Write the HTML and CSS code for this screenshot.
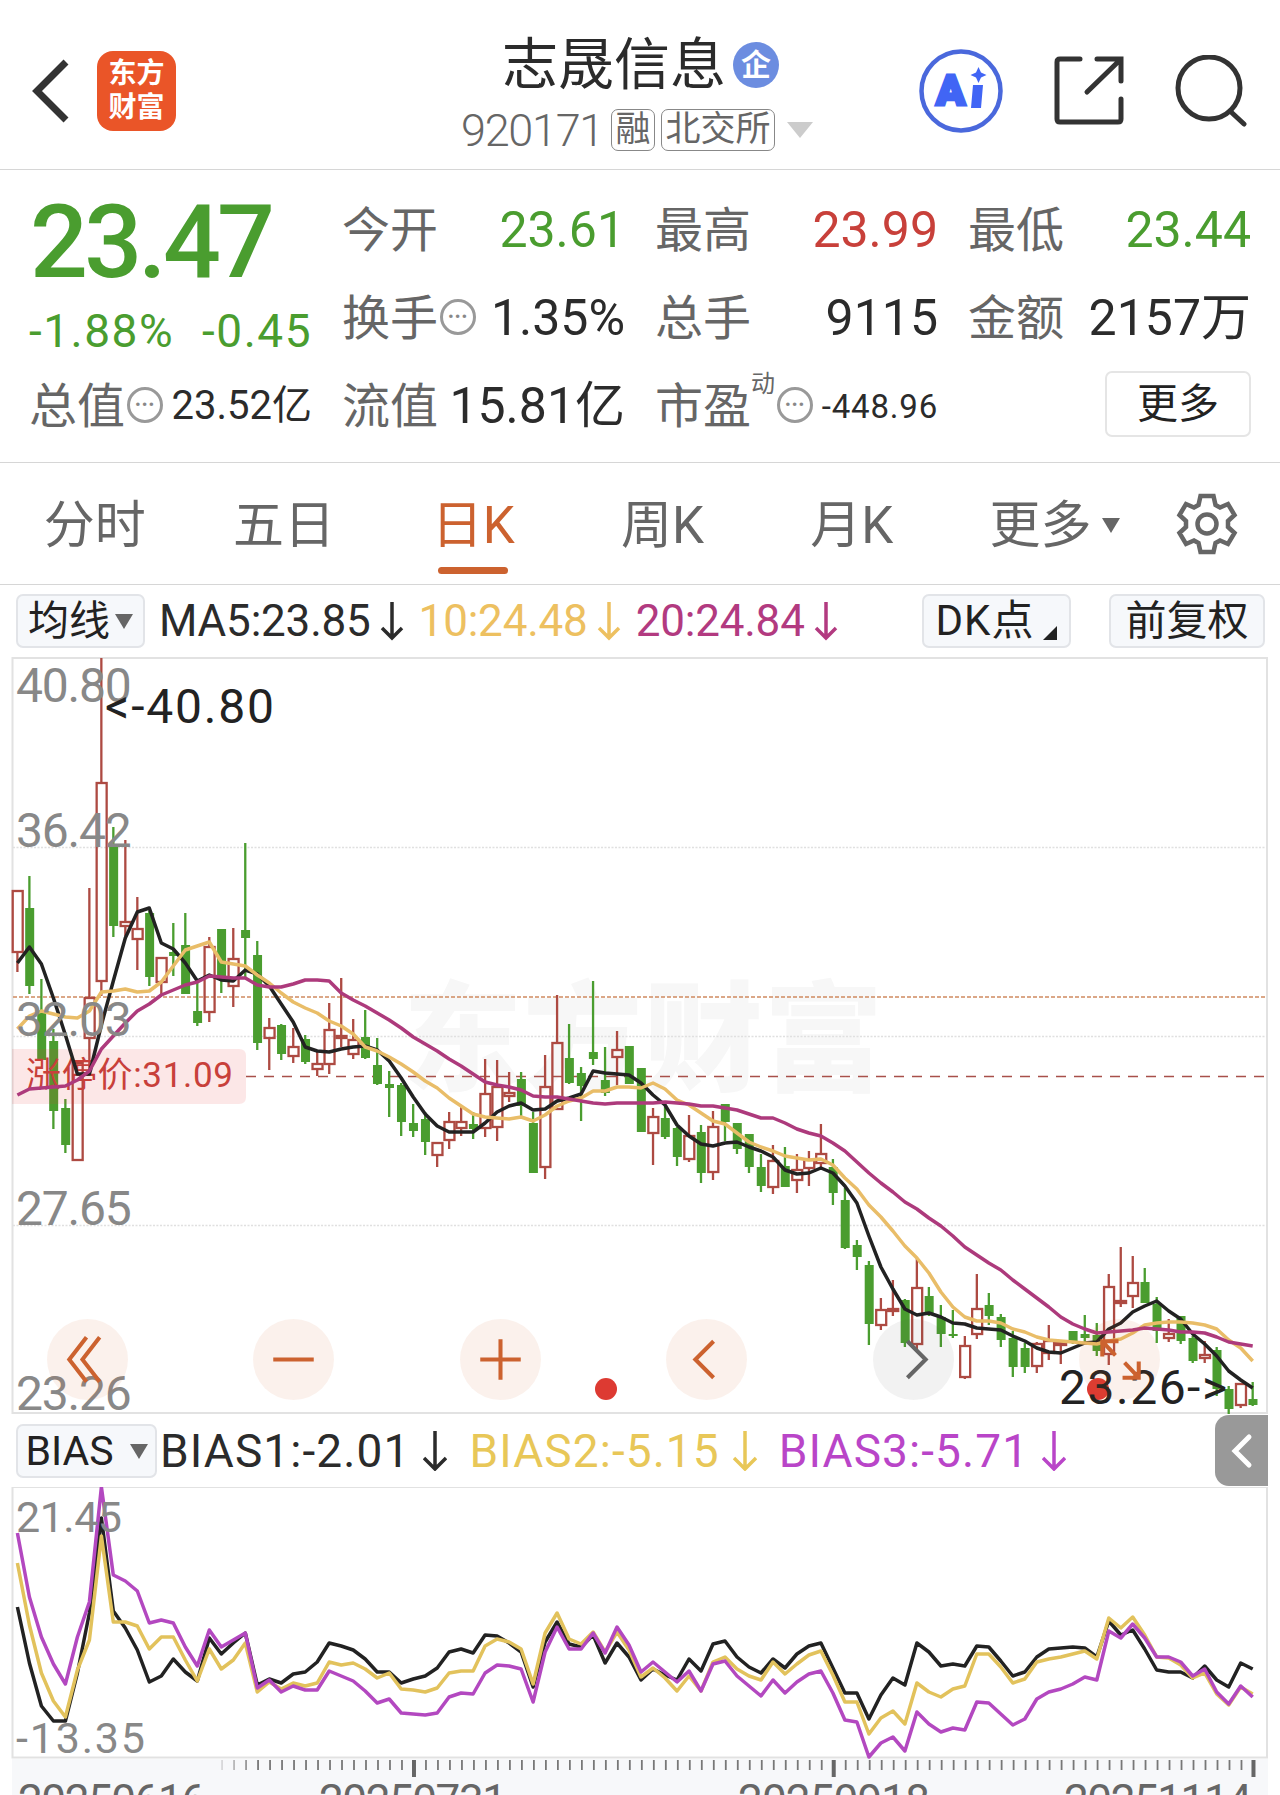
FILE: index.html
```html
<!DOCTYPE html>
<html lang="zh-CN">
<head>
  <meta charset="UTF-8">
  <title>志晟信息 920171</title>
  <link rel="stylesheet" href="styles.css">
</head>
<body>

<header class="topbar">
  <svg class="back" width="40" height="66" viewBox="0 0 40 66"><path d="M35 4 L6 33 L35 62"/></svg>
  <div class="logo"><span>东方</span><span>财富</span></div>
  <div class="title">
    <div class="name">志晟信息<span class="badge">企</span></div>
    <div class="code"><span class="num">920171</span><span class="tag">融</span><span class="tag">北交所</span><i class="tri tri-light"></i></div>
  </div>
  <svg class="ai" width="84" height="84" viewBox="0 0 84 84">
    <circle cx="42" cy="42" r="39.5"/>
    <text x="17" y="56">A</text>
    <path d="M54 36 h10 l-2 23 h-10z M59.500 18 l2.500 5.500 5.500 2.500 -5.500 2.500 -2.500 5.500 -2.500 -5.500 -5.500 -2.500 5.500 -2.500z"/>
  </svg>
  <svg class="share" width="70" height="70" viewBox="0 0 70 70"><path d="M26 3 H6 Q3 3 3 6 V63 Q3 66 6 66 H64 Q67 66 67 63 V43 M43 3 H67 V25 M66 4 L33 36"/></svg>
  <svg class="search" width="72" height="72" viewBox="0 0 72 72"><circle cx="34" cy="33" r="31"/><path d="M55 56 L69 69"/></svg>
</header>

<section class="quote">
  <div class="price">
    <div class="last">23.47</div>
    <div class="change"><span>-1.88%</span><span>-0.45</span></div>
  </div>
  <div class="cell"><label>今开</label><b class="green">23.61</b></div>
  <div class="cell"><label>最高</label><b class="red">23.99</b></div>
  <div class="cell"><label>最低</label><b class="green">23.44</b></div>
  <div class="cell"><label>换手</label><i class="dots">•••</i><b>1.35%</b></div>
  <div class="cell"><label>总手</label><b>9115</b></div>
  <div class="cell"><label>金额</label><b>2157万</b></div>
  <div class="cell"><label>总值</label><i class="dots">•••</i><b class="mid">23.52亿</b></div>
  <div class="cell"><label>流值</label><b>15.81亿</b></div>
  <div class="cell"><label>市盈</label><sup>动</sup><i class="dots">•••</i><b class="small">-448.96</b></div>
  <div class="cell"><button class="more">更多</button></div>
</section>

<nav class="tabs">
  <a>分时</a>
  <a>五日</a>
  <a class="active">日K</a>
  <a>周K</a>
  <a>月K</a>
  <a class="tab-more">更多<i class="tri"></i></a>
  <svg class="gear" width="62" height="62" viewBox="-31 -31 62 62">
    <path d="M-6.500 -28 H6.500 L8.500 -19 L13 -16.500 L21 -20 L27.500 -9 L21 -3 V3 L27.500 9 L21 20 L13 16.500 L8.500 19 L6.500 28 H-6.500 L-8.500 19 L-13 16.500 L-21 20 L-27.500 9 L-21 3 V-3 L-27.500 -9 L-21 -20 L-13 -16.500 L-8.500 -19Z"/>
    <circle r="9.500"/>
  </svg>
</nav>

<div class="indicator ma">
  <button class="pill">均线<i class="tri"></i></button>
  <span class="ma5">MA5:23.85</span><svg class="arrow ma5" viewBox="0 0 24 40"><path d="M12 1 V37 M2 27 L12 37 L22 27"/></svg>
  <span class="ma10">10:24.48</span><svg class="arrow ma10" viewBox="0 0 24 40"><path d="M12 1 V37 M2 27 L12 37 L22 27"/></svg>
  <span class="ma20">20:24.84</span><svg class="arrow ma20" viewBox="0 0 24 40"><path d="M12 1 V37 M2 27 L12 37 L22 27"/></svg>
  <button class="pill dk">DK点<i class="corner"></i></button>
  <button class="pill fq">前复权</button>
</div>

<div class="kline">
  <svg id="kline" width="1280" height="758" viewBox="0 657 1280 758">
    <text class="watermark" x="403" y="1082" textLength="480">东方财富</text>
    <rect class="frame" x="12.500" y="658" width="1254.500" height="755"/>
    <path class="grid" d="M13 847.500 H1267 M13 1036.500 H1267 M13 1225.500 H1267"/>
    <path class="line-orange" d="M13 997 H1267"/>
    <path class="line-red" d="M246 1076.500 H1267"/>
    <g id="candles"></g>
    <path class="limit-box" d="M12 1049 H239 Q246 1049 246 1056 V1097 Q246 1104 239 1104 H12Z"/>
    <text class="limit-text" x="26" y="1087" textLength="207">涨停价:31.09</text>
    <g id="maLines"></g>
    <g class="axis">
      <text x="16" y="702">40.80</text>
      <text x="16" y="847">36.42</text>
      <text x="16" y="1036">32.03</text>
      <text x="16" y="1225">27.65</text>
      <text x="16" y="1410">23.26</text>
    </g>
    <circle class="event" cx="606" cy="1389" r="11"/>
    <circle class="event" cx="1098" cy="1389" r="11"/>
    <text class="mark" x="105" y="723" textLength="169">&lt;-40.80</text>
    <text class="mark" x="1059" y="1404" textLength="168">23.26-&gt;</text>
  </svg>
  <div class="tools">
    <svg viewBox="-40 -40 80 80"><path d="M-1 -22 L-18 0 L-1 22 M12 -22 L-5 0 L12 22"/></svg>
    <svg viewBox="-40 -40 80 80"><path d="M-20 0 H20"/></svg>
    <svg viewBox="-40 -40 80 80"><path d="M-20 0 H20 M0 -20 V20"/></svg>
    <svg viewBox="-40 -40 80 80"><path d="M7 -18 L-11 0 L7 18"/></svg>
    <svg class="off" viewBox="-40 -40 80 80"><path d="M-6 -18 L12 0 L-6 18"/></svg>
    <svg viewBox="-40 -40 80 80"><path d="M-17 -3 V-18 H-1 M-17 -18 L-4 -4 M3 18 H19 V2 M19 18 L5 3"/></svg>
  </div>
</div>

<div class="indicator bias">
  <button class="pill">BIAS<i class="tri"></i></button>
  <span class="b1">BIAS1:-2.01</span><svg class="arrow b1" viewBox="0 0 24 40"><path d="M12 0 V38 M1 27 L12 38 L23 27"/></svg>
  <span class="b2">BIAS2:-5.15</span><svg class="arrow b2" viewBox="0 0 24 40"><path d="M12 0 V38 M1 27 L12 38 L23 27"/></svg>
  <span class="b3">BIAS3:-5.71</span><svg class="arrow b3" viewBox="0 0 24 40"><path d="M12 0 V38 M1 27 L12 38 L23 27"/></svg>
  <div class="toggle"><svg width="24" height="36" viewBox="0 0 24 36"><path d="M19 4 L5 18 L19 32"/></svg></div>
</div>

<svg class="sub" width="1280" height="308" viewBox="0 1487 1280 308">
  <rect class="frame" x="12.500" y="1487" width="1254.500" height="270.500"/>
  <rect class="timebar" x="12" y="1759" width="1256" height="36"/>
  <g id="biasLines"></g>
  <g class="axis axis-sub">
    <text x="16" y="1532" textLength="106">21.45</text>
    <text x="16" y="1753" textLength="129">-13.35</text>
  </g>
  <g id="ticks"></g>
  <g class="dates">
    <text x="18" y="1816" textLength="188">20250616</text>
    <text x="319" y="1816" textLength="188">20250731</text>
    <text x="738" y="1816" textLength="192">20250918</text>
    <text x="1064" y="1816" textLength="188">20251114</text>
  </g>
</svg>

<script>
  const x = i => 17.4 + i * 11.993;

  // [up(1)/down(0), high, body top, body bottom, low]
  const candles = [
    [1,891,891,952,972],[0,876,908,986,994],[0,979,1012,1060,1060],[0,1029,1041,1111,1129],[0,1099,1108,1145,1153],
    [1,1063,1063,1160,1160],[1,888,998,1038,1070],[1,658,783,981,996],[0,827,846,926,937],[1,840,922,926,936],
    [1,897,929,939,970],[0,911,913,977,986],[1,958,958,982,994],[0,923,952,956,976],[0,913,945,994,994],
    [0,982,1011,1023,1026],[1,937,947,1012,1022],[0,929,929,979,993],[1,928,959,986,1007],[0,843,930,938,977],
    [0,941,955,1043,1050],[1,1018,1028,1038,1070],[0,1024,1025,1054,1060],[1,1028,1047,1056,1063],[0,1035,1039,1062,1064],
    [1,1050,1064,1069,1076],[1,1003,1030,1064,1074],[1,978,1036,1038,1047],[1,1019,1040,1054,1059],[0,1010,1037,1058,1059],
    [0,1038,1065,1084,1085],[0,1071,1084,1088,1117],[0,1083,1085,1122,1136],[0,1104,1123,1131,1137],[0,1112,1119,1142,1155],
    [1,1143,1143,1155,1167],[1,1112,1122,1140,1149],[1,1107,1122,1128,1136],[0,1112,1124,1129,1139],[1,1059,1094,1128,1137],
    [1,1060,1087,1127,1141],[1,1072,1093,1096,1102],[0,1072,1079,1106,1116],[0,1112,1123,1173,1173],[1,1055,1087,1167,1179],
    [1,995,1043,1109,1110],[0,1024,1058,1083,1084],[0,1067,1073,1086,1121],[0,981,1052,1059,1065],[0,1047,1080,1093,1096],
    [1,1031,1050,1057,1085],[0,1046,1046,1084,1084],[0,1068,1068,1132,1132],[1,1108,1117,1133,1165],[0,1107,1118,1137,1139],
    [0,1127,1128,1157,1166],[1,1115,1136,1159,1162],[0,1125,1132,1173,1183],[1,1111,1127,1172,1180],[0,1104,1104,1122,1141],
    [0,1123,1123,1149,1154],[0,1134,1134,1167,1173],[0,1154,1167,1186,1192],[1,1145,1161,1187,1194],[0,1147,1166,1187,1187],
    [1,1154,1170,1180,1193],[1,1151,1160,1168,1186],[1,1124,1154,1163,1168],[0,1159,1167,1193,1205],[0,1188,1200,1248,1249],
    [0,1240,1245,1257,1270],[0,1261,1265,1324,1345],[1,1298,1310,1325,1330],[1,1280,1309,1311,1316],[0,1299,1300,1343,1347],
    [1,1258,1288,1344,1352],[0,1287,1296,1315,1316],[0,1305,1317,1334,1347],[0,1310,1334,1336,1338],[1,1336,1346,1377,1379],
    [1,1274,1309,1334,1339],[0,1293,1305,1316,1325],[0,1314,1317,1340,1347],[0,1331,1338,1367,1377],[0,1343,1348,1367,1373],
    [1,1342,1344,1366,1373],[1,1325,1341,1353,1360],[1,1341,1343,1345,1364],[0,1331,1331,1341,1344],[0,1315,1334,1338,1342],
    [0,1323,1335,1351,1356],[1,1274,1287,1354,1365],[1,1247,1301,1303,1307],[1,1256,1283,1296,1308],[0,1268,1282,1303,1303],
    [0,1297,1304,1331,1343],[1,1319,1334,1338,1342],[0,1316,1316,1341,1344],[0,1336,1338,1361,1363],[1,1341,1355,1358,1363],
    [0,1347,1350,1389,1396],[0,1386,1389,1409,1414],[1,1383,1384,1405,1408],[0,1382,1399,1405,1406]
  ];

  const ma5 = [963,947,964,998,1035,1074,1074,1025,981,938,912,908,943,949,963,981,975,980,981,970,974,986,1004,1022,1047,1051,1052,1049,1047,1046,1050,1061,1078,1097,1114,1126,1132,1132,1132,1123,1112,1106,1103,1110,1109,1101,1098,1094,1071,1073,1074,1075,1083,1095,1105,1125,1136,1144,1146,1143,1142,1147,1151,1157,1170,1174,1173,1168,1173,1186,1203,1236,1267,1289,1309,1315,1313,1317,1323,1324,1328,1329,1330,1336,1341,1348,1352,1353,1348,1343,1342,1329,1323,1312,1306,1301,1311,1319,1334,1344,1356,1371,1380,1388];
  const ma10 = [1029,1016,1011,1014,1017,1018,1011,992,991,989,992,991,982,966,950,946,942,962,964,966,975,983,993,1002,1008,1013,1021,1026,1034,1047,1051,1057,1064,1072,1081,1088,1098,1106,1114,1117,1118,1119,1117,1121,1115,1106,1101,1098,1091,1091,1087,1087,1088,1083,1089,1100,1105,1113,1121,1124,1133,1142,1147,1151,1156,1158,1160,1159,1165,1178,1189,1205,1217,1231,1246,1258,1273,1292,1307,1317,1321,1321,1323,1329,1332,1337,1340,1341,1342,1343,1344,1341,1339,1333,1325,1323,1322,1322,1323,1325,1329,1340,1348,1361];
  const ma20 = [1095,1089,1088,1087,1086,1080,1071,1049,1036,1023,1011,1004,995,990,985,982,976,977,978,978,985,987,987,984,980,980,981,993,1000,1006,1013,1020,1028,1037,1044,1051,1059,1066,1074,1082,1085,1087,1090,1096,1097,1097,1099,1101,1103,1104,1103,1103,1103,1103,1102,1103,1104,1106,1106,1108,1110,1114,1118,1118,1123,1129,1133,1136,1143,1151,1162,1173,1183,1192,1202,1209,1218,1226,1236,1247,1255,1263,1270,1280,1289,1298,1307,1317,1324,1329,1333,1332,1331,1330,1328,1329,1330,1332,1332,1333,1337,1342,1344,1346];

  const bias1 = [1607,1663,1706,1721,1721,1673,1613,1518,1611,1628,1650,1682,1676,1659,1672,1681,1638,1654,1643,1633,1685,1679,1683,1674,1672,1662,1643,1646,1650,1659,1672,1672,1683,1679,1676,1668,1652,1649,1653,1635,1636,1643,1652,1687,1642,1622,1644,1647,1635,1663,1643,1657,1680,1669,1675,1680,1659,1671,1644,1641,1657,1667,1673,1659,1668,1654,1646,1643,1668,1693,1693,1719,1695,1678,1685,1643,1652,1666,1664,1666,1646,1647,1661,1676,1672,1657,1649,1648,1647,1648,1657,1621,1635,1630,1649,1670,1672,1672,1678,1666,1680,1687,1663,1669];
  const bias2 = [1563,1625,1673,1701,1717,1670,1640,1536,1622,1622,1626,1649,1637,1637,1660,1681,1649,1669,1660,1643,1692,1682,1689,1683,1686,1683,1662,1665,1663,1669,1678,1673,1689,1690,1692,1688,1673,1671,1671,1646,1639,1642,1649,1684,1633,1613,1639,1644,1632,1652,1632,1650,1677,1668,1678,1691,1676,1691,1662,1657,1669,1676,1680,1662,1674,1664,1655,1651,1675,1702,1702,1734,1718,1711,1724,1683,1692,1697,1689,1686,1654,1654,1667,1683,1679,1662,1659,1657,1654,1651,1659,1618,1628,1617,1635,1657,1658,1665,1678,1673,1694,1705,1687,1694];
  const bias3 = [1533,1597,1637,1664,1684,1637,1602,1487,1575,1581,1591,1623,1620,1623,1647,1666,1630,1647,1640,1633,1688,1680,1692,1686,1690,1690,1671,1676,1681,1691,1703,1699,1713,1714,1715,1713,1697,1693,1694,1673,1665,1666,1669,1702,1652,1627,1649,1649,1633,1653,1627,1645,1672,1662,1672,1682,1671,1691,1664,1661,1676,1686,1696,1680,1693,1682,1674,1671,1693,1720,1722,1757,1743,1737,1751,1712,1724,1732,1728,1730,1702,1703,1714,1725,1719,1699,1692,1689,1684,1677,1680,1631,1638,1624,1638,1657,1657,1662,1676,1669,1692,1704,1686,1697];

  function line(data, cls) {
    const pts = data.map((y, i) => `${x(i).toFixed(1)},${y}`).join(" ");
    return `<polyline class="${cls}" points="${pts}"/>`;
  }

  let html = "";
  candles.forEach(([up, high, top, bottom, low], i) => {
    const cx = x(i);
    const cls = up ? "up" : "down";
    html += `<path class="${cls}" d="M${cx} ${high} V${top} M${cx} ${bottom} V${low}"/>`;
    if (up) {
      html += `<rect class="up" x="${cx - 4.7}" y="${top}" width="10" height="${bottom - top}"/>`;
    } else {
      html += `<rect class="down-body" x="${cx - 4.2}" y="${top}" width="9" height="${bottom - top}"/>`;
    }
  });
  document.getElementById("candles").innerHTML = html;
  document.getElementById("maLines").innerHTML = line(ma5, "s-black") + line(ma10, "s-yellow") + line(ma20, "s-plum");
  document.getElementById("biasLines").innerHTML = line(bias1, "s-black") + line(bias2, "s-gold") + line(bias3, "s-purple");

  // time axis, the first ticks fade in
  let ticks = "";
  for (let i = 17; i <= 103; i++) {
    const major = [33, 68, 103].includes(i);
    const opacity = Math.min(1, (i - 16) * 0.25);
    ticks += `<path class="${major ? "major" : "minor"}" opacity="${opacity}" d="M${x(i) + 0.8} 1760 V${major ? 1777 : 1770}"/>`;
  }
  document.getElementById("ticks").innerHTML = ticks;
</script>

</body>
</html>
```
FILE: styles.css
```css
* {
  box-sizing: border-box;
}
body {
  margin: 0;
  width: 1280px;
  height: 1795px;
  overflow: hidden;
  background: #fff;
  color: #2b2b2b;
  font-family: Roboto, "Noto Sans CJK SC", sans-serif;
  line-height: 1;
}
svg {
  display: block;
  flex: none;
  fill: none;
}
button {
  font-family: inherit;
  color: #222;
  padding: 0;
  line-height: 1;
}

/* top bar */
.topbar {
  display: flex;
  align-items: center;
  height: 170px;
  padding: 12px 32px 0 31px;
  border-bottom: 1px solid #d6d6d6;
}
.back {
  stroke: #333;
  stroke-width: 7;
}
.logo {
  display: flex;
  flex-direction: column;
  align-items: center;
  justify-content: center;
  gap: 6px;
  width: 79px;
  height: 80px;
  margin-left: 26px;
  border-radius: 16px;
  background: #ea5528;
  color: #fff;
  font-size: 28px;
  font-weight: 700;
}
.title {
  width: 356px;
  margin-left: 285px;
  margin-top: 7px;
}
.name {
  display: flex;
  align-items: center;
  padding-left: 41px;
  font-size: 56px;
}
.badge {
  display: flex;
  align-items: center;
  justify-content: center;
  width: 46px;
  height: 46px;
  margin-left: 7px;
  border-radius: 50%;
  background: #6c8de0;
  color: #fff;
  font-size: 30px;
  font-weight: 700;
}
.code {
  display: flex;
  align-items: center;
  height: 42px;
  margin-top: 16px;
  color: #666;
}
.num {
  width: 150px;
  font-size: 45px;
  font-weight: 300;
  letter-spacing: -1.3px;
  white-space: nowrap;
}
.tag {
  height: 42px;
  margin-right: 6px;
  padding: 0 3.5px;
  border: 1.5px solid #888;
  border-radius: 7px;
  font-size: 35px;
  line-height: 40px;
}
.tri {
  width: 0;
  height: 0;
  border: 9px solid transparent;
  border-top: 15px solid #666;
  border-bottom: 0;
}
.tri-light {
  margin-left: 6px;
  border-width: 16px 13px 0;
  border-top-color: #ccc;
}
.ai {
  margin-left: 102px;
  stroke: #4a68dc;
  stroke-width: 4.5;
}
.ai text {
  fill: #4165f5;
  stroke: #4165f5;
  stroke-width: 3;
  font-size: 43px;
  font-weight: 900;
}
.ai path {
  fill: #4165f5;
  stroke: none;
}
.share {
  margin-left: 51px;
  stroke: #333;
  stroke-width: 5;
  stroke-linecap: round;
}
.search {
  margin-left: 51px;
  stroke: #333;
  stroke-width: 5;
  stroke-linecap: round;
}

/* quote */
.quote {
  display: grid;
  grid-template-columns: repeat(4, 283px);
  grid-template-rows: repeat(3, 88px);
  column-gap: 30px;
  height: 293px;
  padding: 16px 29px 0;
  border-bottom: 1px solid #d6d6d6;
}
.price {
  grid-row: span 2;
  color: #4a9d2f;
}
.last {
  margin-top: 5px;
  padding-left: 1px;
  font-size: 102px;
  font-weight: 500;
  letter-spacing: -3.8px;
}
.change {
  display: flex;
  justify-content: space-between;
  margin-top: 15px;
  font-size: 46px;
  letter-spacing: 1.5px;
}
.cell {
  display: flex;
  align-items: center;
  white-space: nowrap;
}
.cell label {
  padding-top: 2px;
  color: #666;
  font-size: 48px;
}
.cell b {
  margin-left: auto;
  font-size: 50px;
  font-weight: 400;
}
.cell .mid {
  font-size: 40px;
}
.cell .small {
  font-size: 33px;
  letter-spacing: 0.8px;
}
.cell sup {
  align-self: flex-start;
  margin-top: 10px;
  color: #666;
  font-size: 24px;
}
.dots {
  flex: none;
  width: 36px;
  height: 36px;
  margin-left: 2px;
  margin-top: -3px;
  border: 3px solid #999;
  border-radius: 50%;
  color: #888;
  font-size: 17px;
  font-style: normal;
  line-height: 29px;
  letter-spacing: 1px;
  text-align: center;
}
.green {
  color: #4a9d2f;
}
.red {
  color: #c8403a;
}
.more {
  width: 146px;
  height: 66px;
  margin-top: -4px;
  margin-left: auto;
  border: 2px solid #e5e5e5;
  border-radius: 7px;
  background: #fff;
  font-size: 41px;
}

/* tabs */
.tabs {
  display: flex;
  align-items: center;
  height: 122px;
  border-bottom: 1px solid #d6d6d6;
  color: #666;
  font-size: 51px;
}
.tabs a {
  display: flex;
  flex-direction: column;
  align-items: center;
  justify-content: center;
  width: 189.300px;
  height: 121px;
  padding-top: 4px;
}
.tabs .active {
  padding-top: 27px;
  color: #cc622f;
}
.active::after {
  content: "";
  width: 70px;
  height: 7px;
  margin-top: 16px;
  border-radius: 4px;
  background: #cc622f;
}
.tabs .tab-more {
  flex-direction: row;
  align-items: center;
  justify-content: flex-start;
  gap: 10px;
  width: 230px;
  padding-left: 43px;
}
.gear {
  stroke: #666;
  stroke-width: 4.5;
}

/* indicator rows */
.indicator {
  display: flex;
  align-items: center;
  height: 72px;
  padding-left: 16px;
  font-size: 44px;
  white-space: nowrap;
}
.indicator span {
  letter-spacing: -0.2px;
}
.pill {
  display: flex;
  flex: none;
  align-items: center;
  justify-content: center;
  gap: 5px;
  width: 129px;
  height: 54px;
  margin-right: 14px;
  border: 2px solid #e2e4e8;
  border-radius: 7px;
  background: #f6f8fb;
  font-size: 41px;
}
.arrow {
  width: 24px;
  height: 40px;
  margin: 0 15px 0 9px;
  stroke: currentColor;
  stroke-width: 3.5;
}
.ma .dk {
  width: 149px;
  margin-left: auto;
  margin-right: 38px;
  font-size: 42px;
  letter-spacing: 1px;
}
.ma .fq {
  width: 156px;
  margin-right: 15px;
}
.corner {
  align-self: flex-end;
  width: 0;
  height: 0;
  margin: 0 0 6px 4px;
  border-left: 14px solid transparent;
  border-bottom: 14px solid #222;
}
.ma10 { color: #edc060; }
.ma20 { color: #b23a80; }
.b2 { color: #e8c758; }
.b3 { color: #b945c8; }
.bias .pill {
  width: 141px;
  gap: 16px;
  margin-right: 3px;
}
.bias {
  font-size: 46px;
}
.bias span {
  letter-spacing: 1.1px;
}
.bias .arrow {
  margin: 0 22px 0 13px;
}
.toggle {
  display: flex;
  align-items: center;
  justify-content: center;
  width: 53px;
  height: 71px;
  margin-top: -1px;
  margin-left: auto;
  margin-right: 12px;
  border-radius: 14px 0 0 14px;
  background: #999;
}
.toggle svg {
  stroke: #fff;
  stroke-width: 5;
  stroke-linecap: round;
}

/* charts */
.kline {
  position: relative;
  height: 758px;
}
.tools {
  position: absolute;
  left: 47px;
  top: 662px;
  display: flex;
  justify-content: space-between;
  width: 1113px;
}
.tools svg {
  width: 81px;
  height: 81px;
  border-radius: 50%;
  background: rgba(216, 100, 40, 0.09);
  stroke: #cc622f;
  stroke-width: 4;
}
.tools .off {
  background: rgba(90, 90, 90, 0.08);
  stroke: #666;
}
.frame {
  stroke: #e2e2e2;
  stroke-width: 2;
}
.grid {
  stroke: #e0e0e0;
  stroke-width: 1.5;
  stroke-dasharray: 2 1.5;
}
.line-orange {
  stroke: #cf8a60;
  stroke-width: 1.5;
  stroke-dasharray: 4 2;
}
.line-red {
  stroke: #a8504a;
  stroke-width: 1.3;
  stroke-dasharray: 10 8;
}
.watermark {
  fill: #f7f7f7;
  font-size: 119px;
  font-weight: 900;
}
.up {
  stroke: #ad4a42;
  stroke-width: 2.3;
}
.down {
  stroke: #4a9d2f;
  stroke-width: 2.3;
}
.down-body {
  fill: #4a9d2f;
}
.limit-box {
  fill: rgba(230, 60, 60, 0.12);
}
.limit-text {
  fill: #c8403a;
  font-size: 35px;
}
.axis text {
  fill: #888;
  font-size: 48px;
  letter-spacing: -1.2px;
}
.axis-sub text {
  font-size: 43px;
  letter-spacing: 0;
}
.mark {
  fill: #222;
  font-size: 48px;
}
.event {
  fill: #dd3a32;
}
polyline {
  stroke-width: 3.5;
  stroke-linejoin: round;
}
.s-black { stroke: #222; }
.s-yellow { stroke: #e9bd68; }
.s-plum { stroke: #ad3a7c; }
.s-gold { stroke: #e2c25c; }
.s-purple { stroke: #b348c0; }
.timebar {
  fill: #f7f8fa;
}
.minor {
  stroke: #777;
  stroke-width: 1.8;
}
.major {
  stroke: #666;
  stroke-width: 4;
}
.dates text {
  fill: #666;
  font-size: 44px;
}
```
